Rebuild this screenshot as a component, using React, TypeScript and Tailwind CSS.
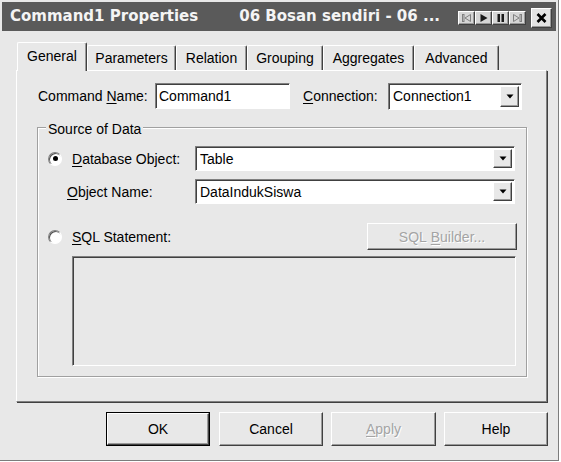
import React from "react";

const raised =
  "border border-t-white border-l-white border-r-[#404040] border-b-[#404040] shadow-[inset_-1px_-1px_0_#9a9a9a]";
const sunken =
  "border border-t-[#808080] border-l-[#808080] border-r-white border-b-white shadow-[inset_1px_1px_0_#404040]";

function Arrow() {
  return (
    <div className={`${raised} bg-[#e8e8e8] w-[19px] h-full flex items-center justify-center`}>
      <svg width="8" height="5" viewBox="0 0 8 5">
        <polygon points="0.5,0.5 7.5,0.5 4,4.5" fill="#000" />
      </svg>
    </div>
  );
}

function Combo({ text, className }: { text: string; className: string }) {
  return (
    <div className={`${sunken} bg-white flex items-stretch p-[2px] ${className}`}>
      <div className="flex-1 flex items-center pl-[2px] leading-none">{text}</div>
      <Arrow />
    </div>
  );
}

function Radio({ checked }: { checked?: boolean }) {
  return (
    <div className="w-[14px] h-[14px] rounded-full border border-t-[#808080] border-l-[#808080] border-r-white border-b-white bg-white flex items-center justify-center shadow-[inset_1px_1px_0_#505050]">
      {checked && <div className="w-[5px] h-[5px] rounded-full bg-black" />}
    </div>
  );
}

function MediaBtn({ children }: { children: React.ReactNode }) {
  return (
    <div className={`${raised} bg-[#d6d6d6] w-[17px] h-[14px] flex items-center justify-center`}>
      <svg width="13" height="10" viewBox="0 0 13 10">
        {children}
      </svg>
    </div>
  );
}

function Tab({ label, className, selected }: { label: string; className: string; selected?: boolean }) {
  if (selected) {
    return (
      <div
        className={`relative z-10 h-[29px] -mb-[1px] bg-[#e8e8e8] border-t border-l border-r border-t-white border-l-white border-r-[#404040] rounded-t-[2px] shadow-[inset_-1px_0_0_#9a9a9a] flex items-center justify-center pb-[2px] ${className}`}
      >
        {label}
      </div>
    );
  }
  return (
    <div
      className={`h-[25px] bg-[#e8e8e8] border-t border-l border-r border-t-white border-l-white border-r-[#404040] rounded-t-[2px] shadow-[inset_-1px_0_0_#9a9a9a] flex items-center justify-center ${className}`}
    >
      {label}
    </div>
  );
}

function Btn({ children, className, isDefault, disabled }: { children: React.ReactNode; className: string; isDefault?: boolean; disabled?: boolean }) {
  const inner = (
    <div
      className={`${raised} bg-[#e8e8e8] w-full h-full flex items-center justify-center ${disabled ? "text-[#a4a4a4] [text-shadow:1px_1px_0_#fff]" : ""}`}
    >
      {children}
    </div>
  );
  if (isDefault) {
    return <div className={`border border-black ${className}`}>{inner}</div>;
  }
  return <div className={className}>{inner}</div>;
}

export default function App() {
  return (
    <div className="w-[561px] h-[462px] bg-white font-['Liberation_Sans',Arial,sans-serif] text-[14px] text-black leading-none">
      <div className="w-[559px] h-[461px] bg-[#e8e8e8] border-r border-b border-[#7c7c7c] p-[2px] flex flex-col">
        {/* Title bar */}
        <div className="h-[29px] w-[554px] bg-[#5a5a5a] flex items-center pl-[8px] text-[#f4f4f4] font-bold text-[15px] font-['DejaVu_Sans',Verdana,sans-serif]">
          <span>Command1 Properties</span>
          <span className="ml-[41px]">06 Bosan sendiri - 06 ...</span>
          <div className="ml-auto flex items-center mr-[4px]">
            <div className="flex mt-[3px]">
              <MediaBtn>
                <rect x="2.5" y="1.5" width="1.5" height="7" fill="none" stroke="#808080" strokeWidth="1" />
                <polygon points="10.5,1.5 5,5 10.5,8.5" fill="none" stroke="#808080" strokeWidth="1" />
              </MediaBtn>
              <MediaBtn>
                <polygon points="3.5,1 10.5,5 3.5,9" fill="#1a1a1a" />
              </MediaBtn>
              <MediaBtn>
                <rect x="3.5" y="1" width="2.5" height="8" fill="#1a1a1a" />
                <rect x="7.5" y="1" width="2.5" height="8" fill="#1a1a1a" />
              </MediaBtn>
              <MediaBtn>
                <polygon points="2.5,1.5 8,5 2.5,8.5" fill="none" stroke="#808080" strokeWidth="1" />
                <rect x="9" y="1.5" width="1.5" height="7" fill="none" stroke="#808080" strokeWidth="1" />
              </MediaBtn>
            </div>
            <div className={`${raised} bg-[#e4e4e4] w-[21px] h-[20px] ml-[5px] flex items-center justify-center mt-[2px]`}>
              <svg width="11" height="10" viewBox="0 0 11 10">
                <path d="M1.5 1 L9.5 9 M9.5 1 L1.5 9" stroke="#000" strokeWidth="2.6" />
              </svg>
            </div>
          </div>
        </div>

        {/* Tabs */}
        <div className="mt-[11px] ml-[15px] flex items-end h-[28px]">
          <Tab label="General" className="w-[70px]" selected />
          <Tab label="Parameters" className="w-[89px]" />
          <Tab label="Relation" className="w-[71px]" />
          <Tab label="Grouping" className="w-[76px]" />
          <Tab label="Aggregates" className="w-[91px]" />
          <Tab label="Advanced" className="w-[85px]" />
        </div>

        {/* Panel */}
        <div className="ml-[14px] w-[531px] h-[332px] border border-t-white border-l-white border-r-[#808080] border-b-[#808080] shadow-[1px_1px_0_#404040] flex flex-col">
          <div className="mt-[12px] ml-[21px] flex items-center h-[26px]">
            <div className="w-[117px]">
              Command <span className="underline underline-offset-2">N</span>ame:
            </div>
            <div className={`${sunken} bg-white w-[135px] h-[26px] flex items-center pl-[3px]`}>Command1</div>
            <div className="ml-[13px] w-[85px]">
              <span className="underline underline-offset-2">C</span>onnection:
            </div>
            <Combo text="Connection1" className="w-[134px] h-[27px]" />
          </div>

          {/* Group box */}
          <div className="relative mt-[18px] ml-[20px] w-[490px] h-[250px] border border-[#a0a0a0] shadow-[inset_1px_1px_0_#ffffff,1px_1px_0_#ffffff] pl-[10px] pt-[18px] flex flex-col">
            <span className="absolute left-[8px] top-[-7px] px-[2px] bg-[#e8e8e8] leading-[16px]">Source of Data</span>

            <div className="flex items-center h-[25px]">
              <Radio checked />
              <div className="ml-[10px] w-[123px]">
                <span className="underline underline-offset-2">D</span>atabase Object:
              </div>
              <Combo text="Table" className="w-[320px] h-[25px]" />
            </div>

            <div className="mt-[8px] flex items-center h-[25px]">
              <div className="ml-[19px] w-[128px]">
                <span className="underline underline-offset-2">O</span>bject Name:
              </div>
              <Combo text="DataIndukSiswa" className="w-[320px] h-[25px]" />
            </div>

            <div className="mt-[19px] flex items-center h-[27px]">
              <Radio />
              <div className="ml-[10px]">
                <span className="underline underline-offset-2">S</span>QL Statement:
              </div>
              <Btn className="ml-auto mr-[9px] w-[150px] h-[27px]" disabled>
                SQL&nbsp;<span className="underline underline-offset-2">B</span>uilder...
              </Btn>
            </div>

            <div className={`${sunken} mt-[6px] ml-[24px] w-[444px] h-[110px] bg-[#e8e8e8]`} />
          </div>
        </div>

        {/* Buttons */}
        <div className="mt-[10px] flex h-[34px]">
          <Btn className="ml-[104px] w-[104px] h-[34px]" isDefault>
            OK
          </Btn>
          <Btn className="ml-[9px] w-[104px] h-[34px]">Cancel</Btn>
          <Btn className="ml-[8px] w-[105px] h-[34px]" disabled>
            <span className="underline underline-offset-2">A</span>pply
          </Btn>
          <Btn className="ml-[8px] w-[104px] h-[34px]">Help</Btn>
        </div>
      </div>
    </div>
  );
}
